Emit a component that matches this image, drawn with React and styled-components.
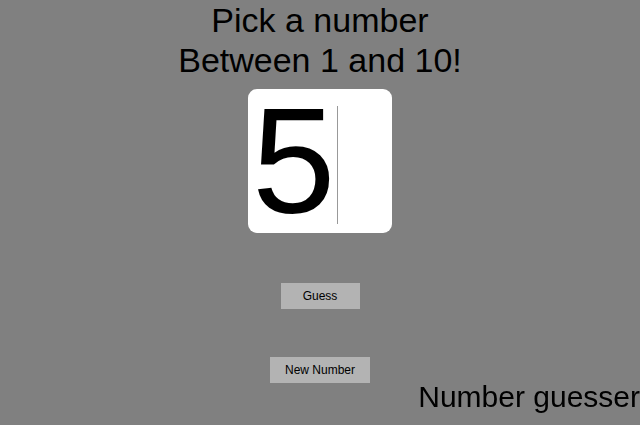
import React from 'react'
import styled, { createGlobalStyle } from 'styled-components'

const Global = createGlobalStyle`
  html, body {
    margin: 0;
    padding: 0;
    height: 100%;
    background: #808080;
    font-family: "Liberation Sans", Arial, sans-serif;
    overflow: hidden;
  }
`

const Page = styled.div`
  display: flex;
  flex-direction: column;
  align-items: center;
  height: 425px;
`

const Title = styled.h1`
  margin: 0;
  font-size: 34px;
  font-weight: 400;
  line-height: 40px;
  text-align: center;
  color: #000;
`

const NumberBox = styled.div`
  margin-top: 9px;
  width: 144px;
  height: 144px;
  background: #fff;
  border-radius: 9px;
  display: flex;
  align-items: center;
  padding-left: 4px;
  box-sizing: border-box;
  font-size: 150px;
  line-height: 1;
  color: #000;
`

const Caret = styled.span`
  display: inline-block;
  width: 1px;
  height: 118px;
  margin-left: 2px;
  margin-top: 8px;
  background: #999;
`

const Button = styled.button`
  margin-top: ${p => p.$gap}px;
  width: ${p => p.$w}px;
  height: 26px;
  border: none;
  background: #b3b3b3;
  font-family: "Liberation Sans", Arial, sans-serif;
  font-size: 12px;
  color: #000;
  padding: 0;
`

const Footer = styled.div`
  position: fixed;
  right: 0;
  bottom: 10px;
  font-size: 30px;
  line-height: 36px;
  color: #000;
`

export default function App() {
  return (
    <>
      <Global />
      <Page>
        <Title>
          Pick a number
          <br />
          Between 1 and 10!
        </Title>
        <NumberBox>
          <span>5</span>
          <Caret />
        </NumberBox>
        <Button $gap={50} $w={79}>Guess</Button>
        <Button $gap={48} $w={100}>New Number</Button>
      </Page>
      <Footer>Number guesser</Footer>
    </>
  )
}
